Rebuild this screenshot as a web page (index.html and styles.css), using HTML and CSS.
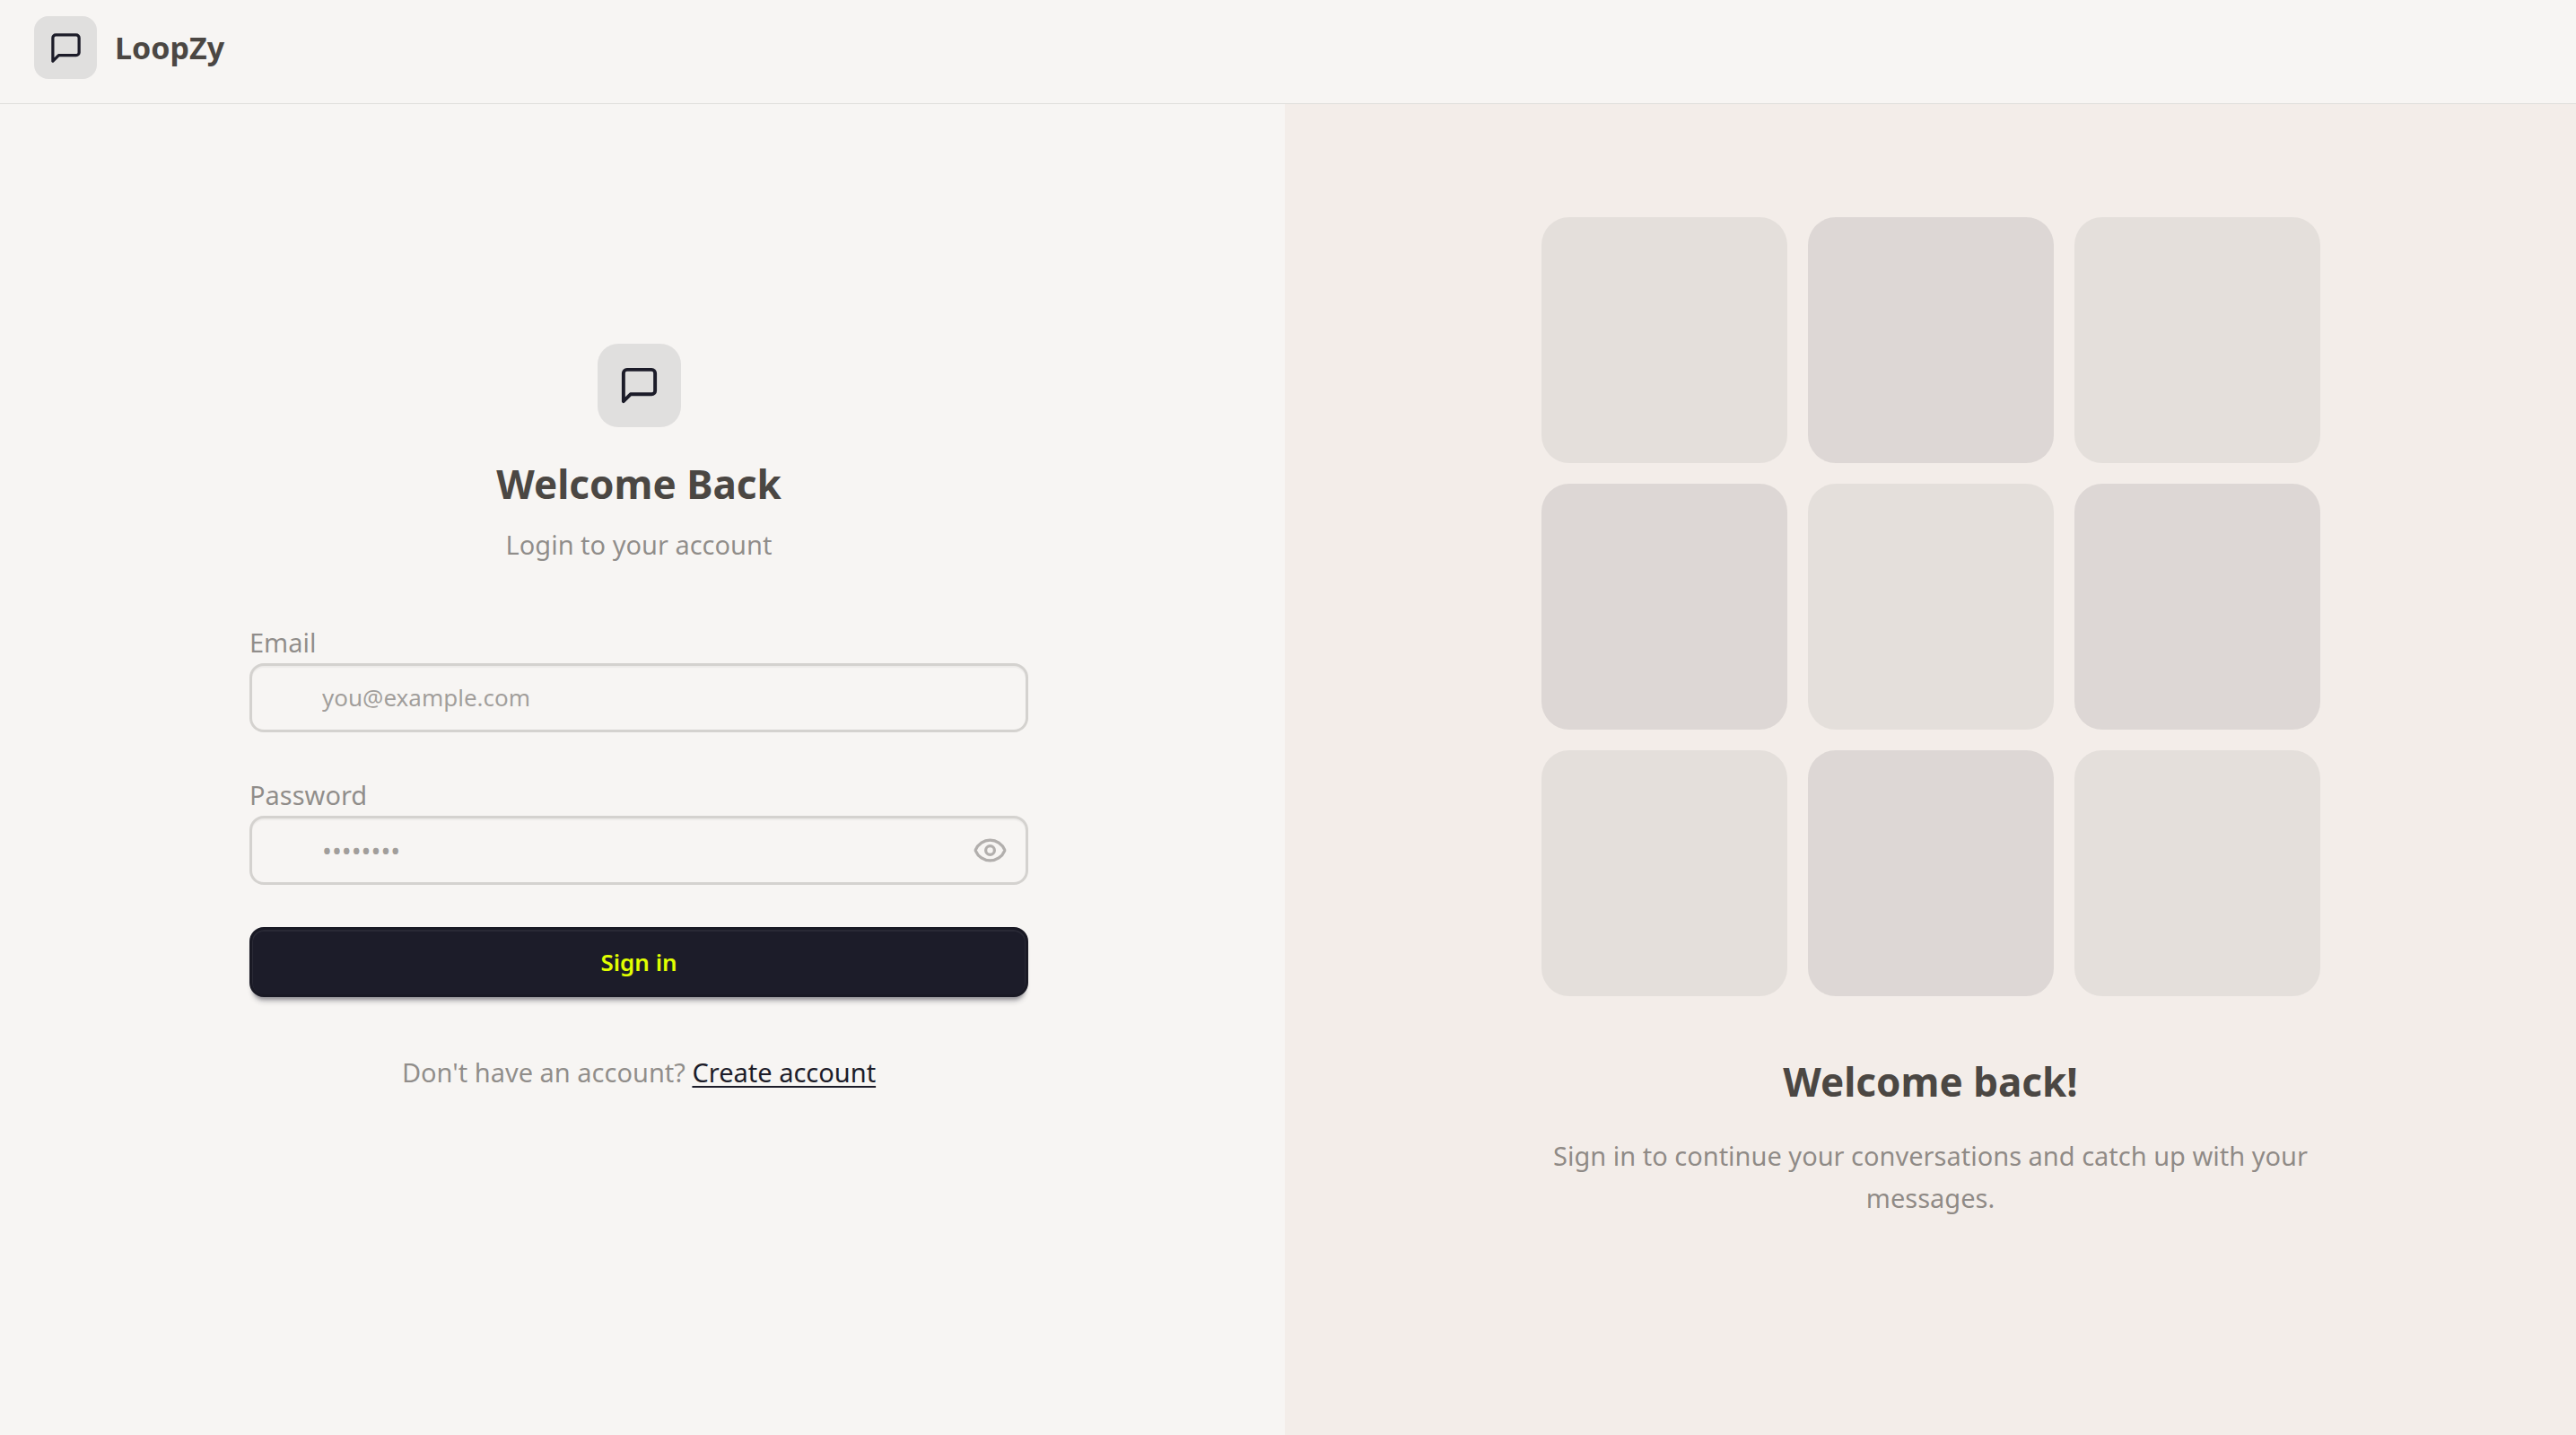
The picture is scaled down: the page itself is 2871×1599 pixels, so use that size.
FILE: index.html
```html
<!DOCTYPE html>
<html lang="en">
<head>
  <meta charset="utf-8">
  <meta name="viewport" content="width=device-width, initial-scale=1">
  <title>LoopZy</title>
  <link rel="stylesheet" href="styles.css">
</head>
<body>
  <header class="navbar">
    <a class="brand" href="#">
      <span class="brand-icon">
        <svg class="icon-brand" viewBox="0 0 24 24" aria-hidden="true"><path d="M21 15a2 2 0 0 1-2 2H7l-4 4V5a2 2 0 0 1 2-2h14a2 2 0 0 1 2 2z"/></svg>
      </span>
      <span class="brand-name">LoopZy</span>
    </a>
  </header>
  <main class="layout">
    <section class="panel panel-form">
      <div class="content">
        <div class="hero-icon">
          <svg class="icon-hero" viewBox="0 0 24 24" aria-hidden="true"><path d="M21 15a2 2 0 0 1-2 2H7l-4 4V5a2 2 0 0 1 2-2h14a2 2 0 0 1 2 2z"/></svg>
        </div>
        <h1 class="title">Welcome Back</h1>
        <p class="subtitle">Login to your account</p>
        <form class="form">
          <div class="field">
            <label class="label" for="email">Email</label>
            <input class="input" id="email" type="email" placeholder="you@example.com">
          </div>
          <div class="field">
            <label class="label" for="password">Password</label>
            <div class="input-wrap">
              <input class="input input-password" id="password" type="password" placeholder="••••••••">
              <button class="toggle" type="button" aria-label="Show password">
                <svg class="icon-eye" viewBox="0 0 24 24" aria-hidden="true"><path d="M2.062 12.348a1 1 0 0 1 0-.696 10.75 10.75 0 0 1 19.876 0 1 1 0 0 1 0 .696 10.75 10.75 0 0 1-19.876 0"/><circle cx="12" cy="12" r="3"/></svg>
              </button>
            </div>
          </div>
          <button class="submit" type="submit">Sign in</button>
        </form>
        <p class="signup">Don't have an account? <a class="link" href="#">Create account</a></p>
      </div>
    </section>
    <section class="panel panel-pattern">
      <div class="content">
        <div class="tiles">
          <div class="tile"></div><div class="tile tile-strong"></div><div class="tile"></div>
          <div class="tile tile-strong"></div><div class="tile"></div><div class="tile tile-strong"></div>
          <div class="tile"></div><div class="tile tile-strong"></div><div class="tile"></div>
        </div>
        <h2 class="title title-pattern">Welcome back!</h2>
        <p class="caption">Sign in to continue your conversations and catch up with your messages.</p>
      </div>
    </section>
  </main>
</body>
</html>
```
FILE: styles.css
```css
:root {
  --base-100: oklch(97% 0.0035 67.78);
  --base-200: oklch(95% 0.0081 61.42);
  --content: oklch(40% 0.0081 61.42);
  --primary: oklch(23.27% 0.0249 284.3);
  --primary-content: oklch(94.22% 0.2505 117.44);
  --muted: color-mix(in oklab, var(--content) 60%, transparent);
  --line: color-mix(in oklab, var(--content) 20%, transparent);
  --tint: color-mix(in oklab, var(--primary) 10%, transparent);
}

* { box-sizing: border-box; margin: 0; }

body {
  min-height: 100vh;
  display: flex;
  flex-direction: column;
  background: var(--base-100);
  color: var(--content);
  font: 29px/46px "Noto Sans", "Open Sans", sans-serif;
}

svg {
  display: block;
  fill: none;
  stroke: currentColor;
  stroke-width: 2;
  stroke-linecap: round;
  stroke-linejoin: round;
}

.navbar {
  display: flex;
  padding: 18px 38px 27px;
  border-bottom: 1px solid #dfdedb;
}

.brand {
  display: flex;
  align-items: center;
  gap: 20px;
  color: inherit;
  text-decoration: none;
}

.brand-icon,
.hero-icon {
  display: grid;
  place-items: center;
  background: var(--tint);
  color: var(--primary);
}

.brand-icon { width: 70px; height: 70px; border-radius: 16px; }
.hero-icon { width: 93px; height: 93px; border-radius: 23px; margin: 0 auto 35px; }
.icon-brand { width: 39px; height: 39px; }
.icon-hero { width: 47px; height: 47px; }
.icon-eye { width: 39px; height: 39px; }

.brand-name { font-size: 34px; line-height: 48px; font-weight: 700; }

.layout {
  flex: 1;
  display: grid;
  grid-template-columns: 1432fr 1439fr;
}

.panel {
  display: flex;
  flex-direction: column;
  justify-content: center;
  align-items: center;
  padding: 0 24px 115px;
}

.panel-form { padding-right: 32px; }
.panel-pattern { background: var(--base-200); }

.content {
  width: 100%;
  max-width: 868px;
  text-align: center;
}

.title {
  font-size: 44px;
  line-height: 56px;
  font-weight: 700;
}

.subtitle { margin-top: 17px; color: var(--muted); }

.form {
  display: flex;
  flex-direction: column;
  gap: 47px;
  margin-top: 63px;
  text-align: left;
}

.field { display: flex; flex-direction: column; }
.label { color: var(--muted); }

.input {
  width: 100%;
  height: 77px;
  padding: 0 78px;
  border: 3px solid var(--line);
  border-radius: 16px;
  background: var(--base-100);
  box-shadow: inset 0 2px 1px #0000000a;
  color: inherit;
  font: inherit;
  font-size: 26px;
}

.input-password { font-size: 29px; }

.input::placeholder { color: color-mix(in oklab, var(--content) 50%, transparent); }

.input-wrap { position: relative; display: flex; }

.toggle {
  position: absolute;
  inset: 0 0 0 auto;
  padding: 0 23px;
  border: 0;
  background: none;
  color: color-mix(in oklab, var(--content) 40%, transparent);
}

.submit {
  height: 78px;
  border: 3px solid #191924;
  border-radius: 16px;
  background: var(--primary);
  box-shadow: inset 0 1px 0 1px #ffffff0f, 0 6px 4px -4px #1c1c294d, 0 8px 6px -4px #1c1c294d;
  color: var(--primary-content);
  font: inherit;
  font-size: 26px;
  font-weight: 600;
}

.signup { margin-top: 61px; color: var(--muted); }

.link {
  color: var(--primary);
  text-decoration-thickness: 2px;
  text-underline-offset: 4px;
}

.tiles {
  display: grid;
  grid-template-columns: repeat(3, 1fr);
  gap: 23px;
}

.tile {
  aspect-ratio: 1;
  border-radius: 31px;
  background: #e4dfdb;
}

.tile-strong { background: var(--tint); }
.title-pattern { margin-top: 67px; }
.caption { margin-top: 31px; line-height: 47px; color: var(--muted); }
```
